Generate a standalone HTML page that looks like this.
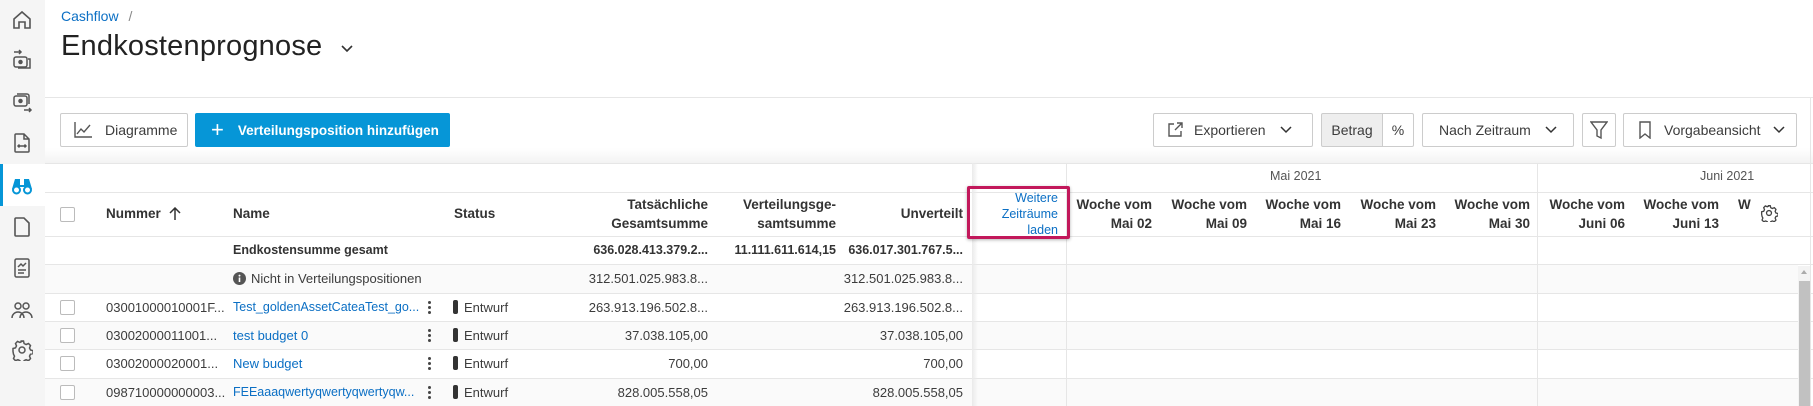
<!DOCTYPE html>
<html><head><meta charset="utf-8"><style>
*{box-sizing:border-box;margin:0;padding:0}
body{width:1813px;height:406px;overflow:hidden;background:#fff;font-family:"Liberation Sans",sans-serif;color:#3c3c3c;font-size:13px;position:relative}
.a{position:absolute;white-space:nowrap}
.side{left:0;top:0;width:45px;height:406px;background:#f5f5f5}
.ic{position:absolute;left:11px;width:22px;height:22px}
.hl{position:absolute;height:1px;background:#e6e6e6}
.vl{position:absolute;width:1px;background:#e6e6e6}
.btn{position:absolute;top:113px;height:34px;border:1px solid #ccc;background:#fff;border-radius:2px;font-size:14px;display:flex;align-items:center}
.cb{position:absolute;left:60px;width:15px;height:15px;border:1px solid #bbb;border-radius:2px;background:#fff}
.r{text-align:right}
.b{font-weight:bold;color:#333;font-size:12.5px}
.lk{color:#0b6fc4}
.dots{position:absolute;left:428px;width:3px}
.dots i{display:block;width:3px;height:3px;background:#444;border-radius:50%;margin-bottom:2px}
.sb{position:absolute;left:453px;width:5px;height:14px;background:#333;border-radius:2px}
.wk{font-weight:bold;text-align:right;line-height:19px;font-size:13.5px;color:#333}
</style></head><body>
<div class="a side"></div>
<div class="a" style="left:0;top:164px;width:45px;height:42px;background:#fff;border-left:3px solid #0696d7"></div>
<svg class="ic" style="top:9px" viewBox="0 0 22 22" fill="none" stroke="#555" stroke-width="1.6"><path d="M3 10 L11 3 L19 10 V19 H14 V13 H8 V19 H3 Z"/></svg>
<svg class="ic" style="top:49px" viewBox="0 0 22 22" fill="none" stroke="#555" stroke-width="1.5"><rect x="3" y="8" width="13" height="10" rx="2"/><path d="M17 10 h2 v9 h-12"/><circle cx="9.5" cy="13" r="1.5" fill="#555"/><path d="M3 3 h7 M8 1 l2 2 -2 2"/></svg>
<svg class="ic" style="top:91px" viewBox="0 0 22 22" fill="none" stroke="#555" stroke-width="1.5"><rect x="3" y="5" width="13" height="10" rx="2"/><path d="M6 3 h10 a2 2 0 0 1 2 2 v8"/><circle cx="9.5" cy="10" r="1.5" fill="#555"/><path d="M13 19 h7 M18 17 l2 2 -2 2"/></svg>
<svg class="ic" style="top:132px" viewBox="0 0 22 22" fill="none" stroke="#555" stroke-width="1.5"><path d="M5 2 h8 l5 5 v12 a1 1 0 0 1 -1 1 h-12 a1 1 0 0 1 -1 -1 v-16 a1 1 0 0 1 1 -1z M13 2 v5 h5"/><path d="M7 14 h8 M8.5 12.5 l-1.5 1.5 1.5 1.5 M13.5 12.5 l1.5 1.5 -1.5 1.5"/></svg>
<svg class="ic" style="top:174px" viewBox="0 0 22 22" fill="#0696d7"><path d="M4 5 h5 v6 h4 v-6 h5 l3 10 h-5 l-1 -2 h-8 l-1 2 h-5z"/><circle cx="5.5" cy="16" r="3.5" fill="#fff" stroke="#0696d7" stroke-width="2"/><circle cx="16.5" cy="16" r="3.5" fill="#fff" stroke="#0696d7" stroke-width="2"/></svg>
<svg class="ic" style="top:216px" viewBox="0 0 22 22" fill="none" stroke="#555" stroke-width="1.6"><path d="M5 2 h8 l5 5 v12 a1 1 0 0 1 -1 1 h-12 a1 1 0 0 1 -1 -1 v-16 a1 1 0 0 1 1 -1z"/></svg>
<svg class="ic" style="top:257px" viewBox="0 0 22 22" fill="none" stroke="#555" stroke-width="1.5"><rect x="4" y="2" width="14" height="18" rx="1.5"/><path d="M7 10 l3 -3 2 2 3 -3 M7 13 h8 M7 16 h6"/></svg>
<svg class="ic" style="top:299px" viewBox="0 0 22 22" fill="none" stroke="#555" stroke-width="1.5"><circle cx="7" cy="7" r="3"/><circle cx="15" cy="7" r="3"/><path d="M1 19 a6 6 0 0 1 12 0 M9 19 a6 6 0 0 1 12 0"/></svg>
<svg class="ic" style="top:339px" viewBox="0 0 22 22" fill="none" stroke="#555" stroke-width="1.5"><circle cx="11" cy="11" r="3"/><path d="M9.5 2 h3 l.6 2.5 2 1 2.4-1 2 2.1-1 2.4 1 2 2.5.6v3l-2.5.6-1 2 1 2.4-2 2.1-2.4-1-2 1-.6 2.5h-3l-.6-2.5-2-1-2.4 1-2-2.1 1-2.4-1-2L2 12.5v-3l2.5-.6 1-2-1-2.4 2-2.1 2.4 1 2-1z"/></svg>

<div class="a lk" style="left:61px;top:8px;font-size:14px">Cashflow <span style="color:#888;margin-left:6px">/</span></div>
<div class="a" style="left:61px;top:30px;font-size:29px;color:#222;letter-spacing:.2px">Endkostenprognose</div>
<svg class="a" style="left:340px;top:44px" width="14" height="10" viewBox="0 0 14 10" fill="none" stroke="#333" stroke-width="1.6"><path d="M2 2 l5 5 5-5"/></svg>
<div class="hl" style="left:45px;top:97px;width:1768px"></div>
<div class="a" style="left:45px;top:148px;width:1768px;height:15px;background:linear-gradient(#fff,#f3f3f3)"></div>

<div class="btn" style="left:60px;width:128px;padding-left:12px"><svg width="20" height="18" viewBox="0 0 20 18" fill="none" stroke="#555" stroke-width="1.4"><path d="M2 1 v15 h17 M4 13 l4-5 3 3 6-7"/></svg><span style="margin-left:12px">Diagramme</span></div>
<div class="btn" style="left:195px;width:255px;background:#0696d7;border-color:#0696d7;color:#fff;font-weight:bold;padding-left:15px;font-size:13.5px"><span style="font-size:22px;font-weight:normal;margin-right:14px">+</span>Verteilungsposition hinzufügen</div>

<div class="btn" style="left:1153px;width:160px;padding-left:12px"><svg width="18" height="18" viewBox="0 0 18 18" fill="none" stroke="#555" stroke-width="1.4"><path d="M8 3 H3 v12 h12 v-5 M9 9 l7-7 M11 2 h5 v5"/></svg><span style="margin-left:10px">Exportieren</span><svg style="margin-left:14px" width="12" height="8" viewBox="0 0 12 8" fill="none" stroke="#333" stroke-width="1.5"><path d="M1 1 l5 5 5-5"/></svg></div>
<div class="btn" style="left:1321px;width:62px;background:#eee;justify-content:center;border-radius:2px 0 0 2px">Betrag</div>
<div class="btn" style="left:1382px;width:32px;justify-content:center;border-radius:0 2px 2px 0">%</div>
<div class="btn" style="left:1422px;width:152px;padding-left:16px">Nach Zeitraum<svg style="margin-left:14px" width="12" height="8" viewBox="0 0 12 8" fill="none" stroke="#333" stroke-width="1.5"><path d="M1 1 l5 5 5-5"/></svg></div>
<div class="btn" style="left:1582px;width:34px;justify-content:center"><svg width="18" height="20" viewBox="0 0 18 20" fill="none" stroke="#555" stroke-width="1.4"><path d="M1 2 h16 l-6 8 v8 l-4-2 v-6z"/></svg></div>
<div class="btn" style="left:1623px;width:174px;padding-left:14px"><svg width="14" height="18" viewBox="0 0 14 18" fill="none" stroke="#555" stroke-width="1.4"><path d="M2 1 h10 v16 l-5-4 -5 4z"/></svg><span style="margin-left:12px">Vorgabeansicht</span><svg style="margin-left:12px" width="12" height="8" viewBox="0 0 12 8" fill="none" stroke="#333" stroke-width="1.5"><path d="M1 1 l5 5 5-5"/></svg></div>

<div class="hl" style="left:45px;top:163px;width:1768px"></div>
<div class="hl" style="left:45px;top:192px;width:1768px"></div>
<div class="hl" style="left:45px;top:236px;width:1768px"></div>
<div class="a" style="left:45px;top:264px;width:1753px;height:29px;background:#fafafa"></div>
<div class="a" style="left:45px;top:321px;width:1753px;height:28px;background:#fafafa"></div>
<div class="a" style="left:45px;top:378px;width:1753px;height:28px;background:#fafafa"></div>
<div class="hl" style="left:45px;top:264px;width:1768px"></div>
<div class="hl" style="left:45px;top:293px;width:1768px"></div>
<div class="hl" style="left:45px;top:321px;width:1768px"></div>
<div class="hl" style="left:45px;top:349px;width:1768px"></div>
<div class="hl" style="left:45px;top:378px;width:1768px"></div>
<div class="a" style="left:972px;top:163px;width:6px;height:243px;background:linear-gradient(90deg,#eaeaea,rgba(255,255,255,0))"></div>
<div class="vl" style="left:1066px;top:163px;height:243px"></div>
<div class="vl" style="left:1537px;top:163px;height:243px"></div>
<div class="vl" style="left:1810px;top:97px;height:309px"></div>

<div class="cb" style="top:207px"></div>
<div class="a b" style="left:106px;top:206px;font-size:13.5px">Nummer</div>
<svg class="a" style="left:169px;top:207px" width="12" height="14" viewBox="0 0 12 14" fill="none" stroke="#333" stroke-width="1.5"><path d="M6 13 V2 M1 6 l5-5 5 5"/></svg>
<div class="a b" style="left:233px;top:206px;font-size:13.5px">Name</div>
<div class="a b" style="left:454px;top:206px;font-size:13.5px">Status</div>
<div class="a b r" style="left:560px;width:148px;top:195px;line-height:19px;font-size:13.5px">Tatsächliche<br>Gesamtsumme</div>
<div class="a b r" style="left:700px;width:136px;top:195px;line-height:19px;font-size:13.5px">Verteilungsge-<br>samtsumme</div>
<div class="a b r" style="left:860px;width:103px;top:206px;font-size:13.5px">Unverteilt</div>
<div class="a lk r" style="left:975px;width:83px;top:190px;line-height:16px;font-size:12.5px">Weitere<br>Zeiträume<br>laden</div>
<div class="a" style="left:967px;top:186px;width:103px;height:53px;border:3px solid #c2185b;border-radius:2px;box-shadow:0 1px 3px rgba(0,0,0,.3)"></div>

<div class="a" style="left:1270px;top:169px;font-size:12.5px;color:#555">Mai 2021</div>
<div class="a" style="left:1700px;top:169px;font-size:12.5px;color:#555">Juni 2021</div>
<div class="a wk" style="left:1070px;width:82px;top:195px">Woche vom<br>Mai 02</div>
<div class="a wk" style="left:1165px;width:82px;top:195px">Woche vom<br>Mai 09</div>
<div class="a wk" style="left:1259px;width:82px;top:195px">Woche vom<br>Mai 16</div>
<div class="a wk" style="left:1354px;width:82px;top:195px">Woche vom<br>Mai 23</div>
<div class="a wk" style="left:1448px;width:82px;top:195px">Woche vom<br>Mai 30</div>
<div class="a wk" style="left:1543px;width:82px;top:195px">Woche vom<br>Juni 06</div>
<div class="a wk" style="left:1637px;width:82px;top:195px">Woche vom<br>Juni 13</div>
<div class="a wk" style="left:1738px;top:195px">W</div>
<svg class="a" style="left:1760px;top:204px" width="18" height="18" viewBox="0 0 22 22" fill="none" stroke="#444" stroke-width="1.6"><circle cx="11" cy="11" r="3"/><path d="M9.5 2 h3 l.6 2.5 2 1 2.4-1 2 2.1-1 2.4 1 2 2.5.6v3l-2.5.6-1 2 1 2.4-2 2.1-2.4-1-2 1-.6 2.5h-3l-.6-2.5-2-1-2.4 1-2-2.1 1-2.4-1-2L2 12.5v-3l2.5-.6 1-2-1-2.4 2-2.1 2.4 1 2-1z"/></svg>

<div class="a b" style="left:233px;top:243px">Endkostensumme gesamt</div>
<div class="a b r" style="left:560px;width:148px;top:243px">636.028.413.379.2...</div>
<div class="a b r" style="left:700px;width:136px;top:243px">11.111.611.614,15</div>
<div class="a b r" style="left:840px;width:123px;top:243px">636.017.301.767.5...</div>

<svg class="a" style="left:233px;top:272px" width="13" height="13" viewBox="0 0 13 13"><circle cx="6.5" cy="6.5" r="6.5" fill="#555"/><rect x="5.7" y="5.5" width="1.6" height="4.5" fill="#fff"/><circle cx="6.5" cy="3.6" r="1" fill="#fff"/></svg>
<div class="a" style="left:251px;top:271px">Nicht in Verteilungspositionen</div>
<div class="a r" style="left:560px;width:148px;top:271px">312.501.025.983.8...</div>
<div class="a r" style="left:840px;width:123px;top:271px">312.501.025.983.8...</div>

<div class="cb" style="top:300px"></div>
<div class="a" style="left:106px;top:300px">03001000010001F...</div>
<div class="a lk" style="left:233px;top:300px;font-size:12.5px">Test_goldenAssetCateaTest_go...</div>
<div class="dots" style="top:301px"><i></i><i></i><i></i></div>
<div class="sb" style="top:300px"></div><div class="a" style="left:464px;top:300px">Entwurf</div>
<div class="a r" style="left:560px;width:148px;top:300px">263.913.196.502.8...</div>
<div class="a r" style="left:840px;width:123px;top:300px">263.913.196.502.8...</div>

<div class="cb" style="top:328px"></div>
<div class="a" style="left:106px;top:328px">03002000011001...</div>
<div class="a lk" style="left:233px;top:328px">test budget 0</div>
<div class="dots" style="top:329px"><i></i><i></i><i></i></div>
<div class="sb" style="top:328px"></div><div class="a" style="left:464px;top:328px">Entwurf</div>
<div class="a r" style="left:560px;width:148px;top:328px">37.038.105,00</div>
<div class="a r" style="left:840px;width:123px;top:328px">37.038.105,00</div>

<div class="cb" style="top:356px"></div>
<div class="a" style="left:106px;top:356px">03002000020001...</div>
<div class="a lk" style="left:233px;top:356px">New budget</div>
<div class="dots" style="top:357px"><i></i><i></i><i></i></div>
<div class="sb" style="top:356px"></div><div class="a" style="left:464px;top:356px">Entwurf</div>
<div class="a r" style="left:560px;width:148px;top:356px">700,00</div>
<div class="a r" style="left:840px;width:123px;top:356px">700,00</div>

<div class="cb" style="top:385px"></div>
<div class="a" style="left:106px;top:385px">098710000000003...</div>
<div class="a lk" style="left:233px;top:385px;font-size:12.5px">FEEaaaqwertyqwertyqwertyqw...</div>
<div class="dots" style="top:386px"><i></i><i></i><i></i></div>
<div class="sb" style="top:385px"></div><div class="a" style="left:464px;top:385px">Entwurf</div>
<div class="a r" style="left:560px;width:148px;top:385px">828.005.558,05</div>
<div class="a r" style="left:840px;width:123px;top:385px">828.005.558,05</div>

<div class="a" style="left:1798px;top:266px;width:12px;height:140px;background:#f3f3f3"></div>
<div class="a" style="left:1801px;top:270px;width:0;height:0;border-left:3px solid transparent;border-right:3px solid transparent;border-bottom:4px solid #aaa"></div>
<div class="a" style="left:1799px;top:281px;width:11px;height:125px;background:#c1c1c1"></div>
</body></html>
